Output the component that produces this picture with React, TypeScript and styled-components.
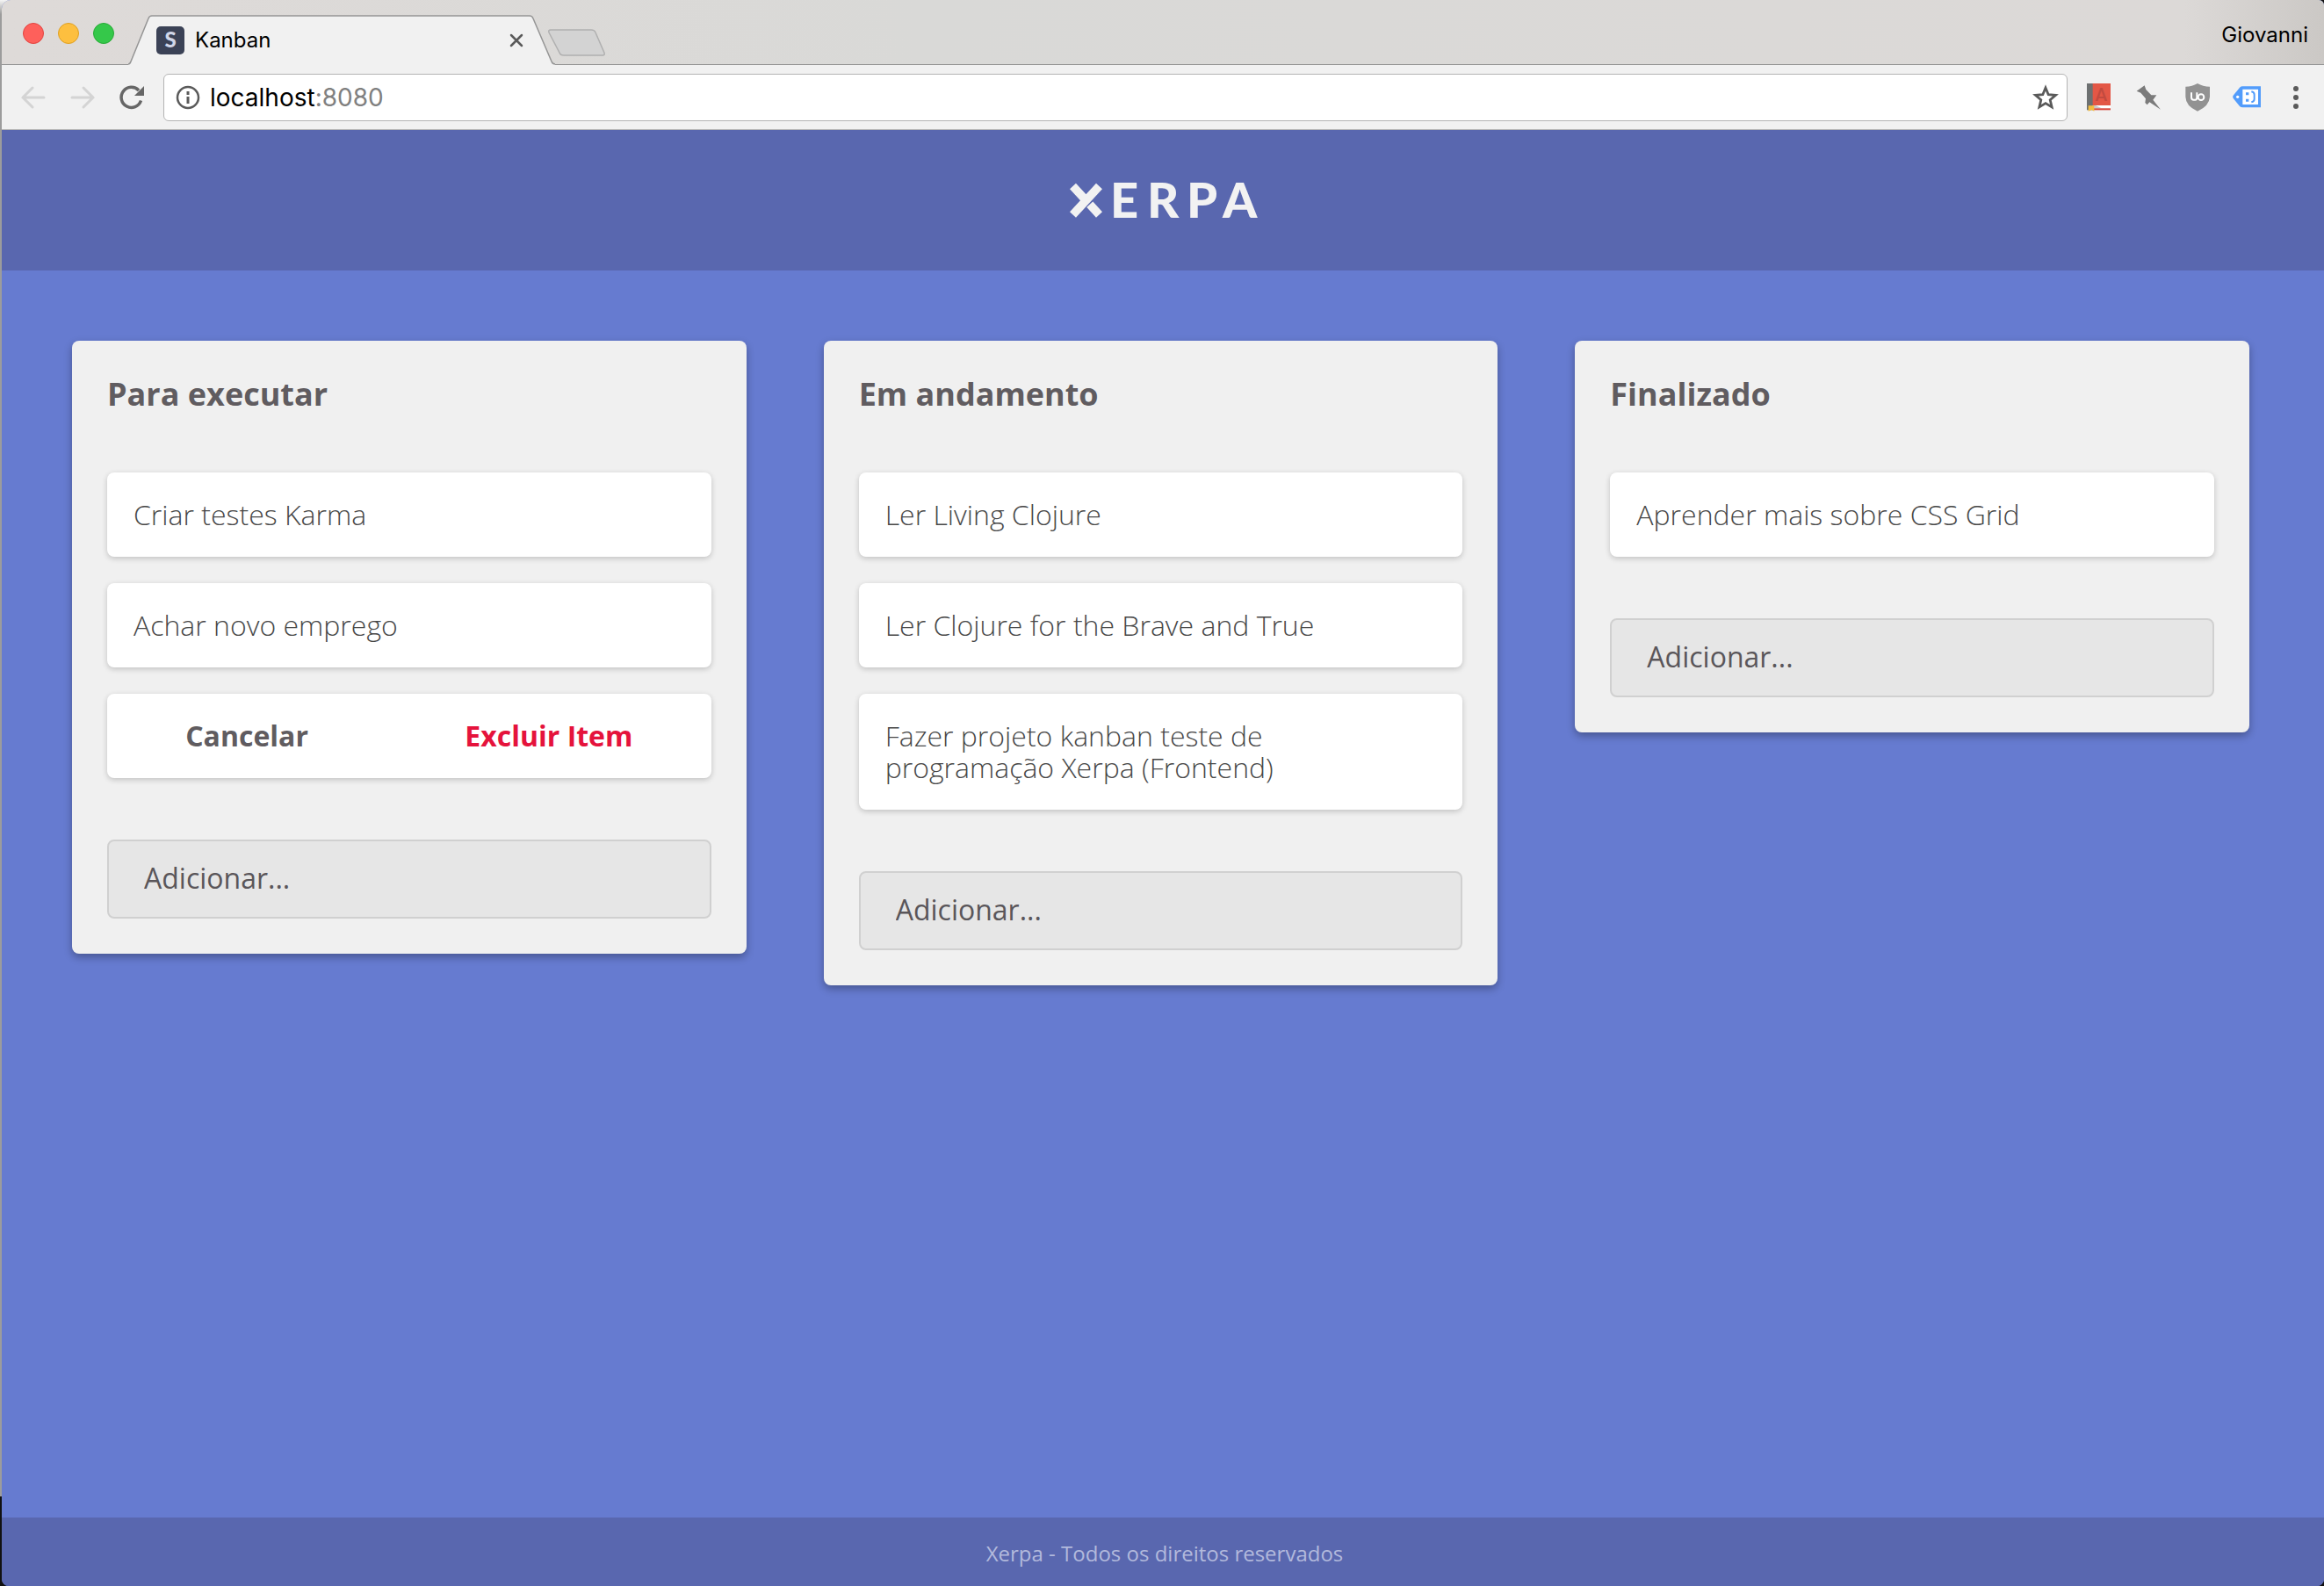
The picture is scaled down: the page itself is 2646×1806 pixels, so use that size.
import React from "react";
import styled, { createGlobalStyle } from "styled-components";

const sans = '"Open Sans", "Noto Sans", sans-serif';
const ui = 'Inter, Roboto, "Liberation Sans", sans-serif';

const GlobalStyle = createGlobalStyle`
  *, *::before, *::after { box-sizing: border-box; }
  html {
    min-height: 100%;
    background:
      linear-gradient(90deg, transparent 50%, #111 50%),
      linear-gradient(0deg, #111 102px, #9c9c9c 102px, #9c9c9c calc(100% - 16px), #f4f4f4 100%);
  }
  body { margin: 0; font-family: ${sans}; }
  button, input { font: inherit; }
`;

const Window = styled.div`
  display: flex;
  flex-direction: column;
  min-height: 100vh;
  margin-left: 2px;
  border-radius: 10px 6px 8px 8px;
  overflow: hidden;
  background: #667bd0;
`;

const IconButton = styled.button`
  display: flex;
  flex: none;
  padding: 0;
  border: 0;
  background: none;
  color: ${(p) => p.color || "#5a5a5a"};
`;

const TabStrip = styled.div`
  display: flex;
  align-items: flex-end;
  height: 74px;
  padding-right: 18px;
  background: linear-gradient(90deg, #dedad8, #d9d9d7 40%, #dcd9d7 94%, #cbc8c5);
  box-shadow: inset 0 -1px #959595;
`;

const Lights = styled.div`
  display: flex;
  gap: 16px;
  padding: 0 16px 24px 24px;
`;

const Light = styled.button<{ $fill: string; $edge: string }>`
  width: 24px;
  height: 24px;
  padding: 0;
  border: 1px solid ${(p) => p.$edge};
  border-radius: 50%;
  background: ${(p) => p.$fill};
`;

const Tab = styled.div`
  display: grid;
  width: 486px;
  height: 57px;
  > * { grid-area: 1 / 1; }
`;

const TabContent = styled.div`
  display: flex;
  align-items: center;
  gap: 12px;
  padding: 0 36px 0 32px;
`;

const TabTitle = styled.span`
  flex: 1;
  font: 24px/32px ${ui};
  color: #000;
`;

const NewTab = styled(IconButton)`
  padding: 0 0 8px;
  margin-left: -10px;
`;

const UserName = styled.button`
  margin-left: auto;
  padding: 0 0 18px;
  border: 0;
  background: none;
  && { font: 24px/32px ${ui}; }
  color: #000;
`;

const Toolbar = styled.div`
  display: flex;
  align-items: center;
  height: 74px;
  padding: 0 16px 0 20px;
  border-bottom: 1px solid #b8b8b8;
  background: #f1f1f1;
`;

const NavButtons = styled.div`
  display: flex;
  gap: 24px;
  margin-right: 20px;
`;

const AddressBar = styled.div`
  display: flex;
  flex: 1;
  align-items: center;
  height: 54px;
  padding: 0 8px 0 12px;
  gap: 10px;
  border: 1px solid #b4b4b4;
  border-radius: 6px;
  background: #fff;
`;

const Address = styled.div`
  flex: 1;
  font: 28px/36px ${ui};
  color: #808080;
  b { font-weight: 400; color: #000; }
`;

const Extensions = styled.div`
  display: flex;
  align-items: center;
  gap: 24px;
  margin-left: 20px;
`;

const Header = styled.header`
  display: flex;
  align-items: center;
  justify-content: center;
  height: 160px;
  padding-left: 4px;
  background: #5967af;
`;

const Board = styled.main`
  display: grid;
  flex: 1;
  grid-template-columns: repeat(3, minmax(0, 1fr));
  align-items: start;
  gap: 88px;
  padding: 80px 85px 80px 80px;
`;

const Column = styled.section`
  padding: 40px;
  border-radius: 8px;
  background: #f0f0f0;
  box-shadow: 0 4px 10px rgba(0, 0, 0, 0.3);
`;

const ColumnTitle = styled.h2`
  margin: 0 0 68px;
  font-size: 36px;
  font-weight: 700;
  line-height: 42px;
  color: #605c60;
`;

const CardList = styled.ul`
  display: grid;
  gap: 30px;
  margin: 0 0 70px;
  padding: 0;
  list-style: none;
`;

const Card = styled.li`
  padding: 30px 60px 30px 30px;
  border-radius: 8px;
  background: #fff;
  box-shadow: 0 2px 6px rgba(0, 0, 0, 0.2);
  font-size: 32px;
  font-weight: 300;
  line-height: 36px;
  color: #484848;
`;

const ActionCard = styled(Card)`
  display: flex;
  justify-content: space-around;
  padding: 30px 0;
`;

const Action = styled.button<{ $danger?: boolean }>`
  padding: 0;
  border: 0;
  background: none;
  color: ${(p) => (p.$danger ? "#e5133c" : "#605c60")};
  && { font-weight: 700; }
`;

const AddInput = styled.input`
  display: block;
  width: 100%;
  height: 90px;
  padding: 0 40px 4px;
  border: 2px solid #d0d0d0;
  border-radius: 8px;
  background: #e6e6e6;
  && { font-size: 32px; }
  color: #5a565a;
  &::placeholder { color: #5a565a; opacity: 1; }
`;

const Footer = styled.footer`
  height: 78px;
  padding: 20px 20px 20px 24px;
  background: #5967af;
  font-size: 24px;
  line-height: 42px;
  text-align: center;
  color: #b2b9dc;
`;

const columns = [
  { title: "Para executar", cards: ["Criar testes Karma", "Achar novo emprego"], confirming: true },
  {
    title: "Em andamento",
    cards: [
      "Ler Living Clojure",
      "Ler Clojure for the Brave and True",
      "Fazer projeto kanban teste de programação Xerpa (Frontend)",
    ],
  },
  { title: "Finalizado", cards: ["Aprender mais sobre CSS Grid"] },
];

const Logo = () => (
  <svg width="216" height="80" viewBox="0 -20 216 80" overflow="visible" role="img" aria-label="Xerpa">
    <path
      d="M33.5 4 3.500 36.500M3.500 4l15 16.200M22.800 24.800 33.500 36.500"
      stroke="#f2f2f2"
      strokeWidth="9.500"
    />
    <text x="46 88 133 174" y="40" fill="#f2f2f2" fontFamily="Lato, sans-serif" fontSize="56" fontWeight="900">
      ERPA
    </text>
  </svg>
);

const Arrow = ({ forward }: { forward?: boolean }) => (
  <svg width="32" height="36" viewBox="0 0 32 36" fill="none" stroke="currentColor" strokeWidth="3">
    <path
      d={forward ? "M4 18h24M17 7l11 11-11 11" : "M28 18H4M15 7 4 18l11 11"}
      strokeLinecap="round"
    />
  </svg>
);

const Reload = () => (
  <svg width="32" height="36" viewBox="0 0 32 36">
    <path d="M24 10A11.500 11.500 0 1 0 26.500 21.500" fill="none" stroke="#666" strokeWidth="3.500" />
    <path d="M30 5v11H19z" fill="#666" />
  </svg>
);

const Book = () => (
  <svg width="32" height="32" viewBox="0 0 96 96">
    <path d="M6 0h21v91H6z" fill="#6d7071" />
    <path d="M26 0h61v75H26z" fill="#e35746" />
    <path d="M26 75h61v10H26z" fill="#fff" />
    <path d="M26 75h10l20 10H26z" fill="#c8cacb" />
    <path d="M26 85h61v6H26z" fill="#d9453a" />
    <text x="55" y="61" textAnchor="middle" fontFamily="Roboto, sans-serif" fontSize="62" fontWeight="500" fill="#c24a3f">
      A
    </text>
    <path d="M11 76h20v19l-8-5-12 5z" fill="#f5bd3c" />
  </svg>
);

const Pin = () => (
  <svg width="32" height="32" viewBox="0 0 96 96">
    <path d="M8 26 35 7l5 14 18 19 18 0-12 16 26 33-38-25-8 9-7-7 2-14-17-20z" fill="#7b7b7b" />
  </svg>
);

const Shield = () => (
  <svg width="32" height="32" viewBox="0 0 96 96">
    <path d="M48 0q18 11 42 11v35q-2 32-42 49Q8 78 7 46V11q23 0 41-11z" fill="#929292" />
    <path d="M27 31v16q0 9 8 9h5q6 0 6-9V31" fill="none" stroke="#fff" strokeWidth="6" />
    <circle cx="60" cy="47" r="10" fill="#929292" stroke="#fff" strokeWidth="6" />
  </svg>
);

const Tag = () => (
  <svg width="32" height="32" viewBox="0 0 96 96">
    <path d="M96 10H34q-6 0-10 4L2 41q-3 5 0 10l22 27q4 4 10 4h62z" fill="#529cfb" />
    <path d="M34 20h53v52H34z" fill="#fff" />
    <circle cx="17" cy="46" r="5" fill="#fff" />
    <path d="M45 31h10v9H45zM45 53h10v9H45z" fill="#529cfb" />
    <path d="M64 28q10 2 10 10v16q0 8-10 10" fill="none" stroke="#529cfb" strokeWidth="6" />
  </svg>
);

const Dots = () => (
  <svg width="32" height="32" viewBox="0 0 32 32" fill="#5a5a5a">
    <circle cx="16" cy="6" r="3" />
    <circle cx="16" cy="16" r="3" />
    <circle cx="16" cy="26" r="3" />
  </svg>
);

const extensions = [
  { label: "Dicionário", Icon: Book },
  { label: "Fixar", Icon: Pin },
  { label: "Bloqueador", Icon: Shield },
  { label: "Etiqueta", Icon: Tag },
  { label: "Menu", Icon: Dots },
];

export default function App() {
  return (
    <>
      <GlobalStyle />
      <Window>
        <TabStrip>
          <Lights>
            <Light $fill="#fe605b" $edge="#e2433f" aria-label="Fechar janela" />
            <Light $fill="#fdbf3f" $edge="#dfa023" aria-label="Minimizar" />
            <Light $fill="#35c84a" $edge="#27aa35" aria-label="Maximizar" />
          </Lights>
          <Tab>
            <svg width="486" height="57" viewBox="0 0 486 57">
              <path d="M0 57V56Q2 56 3 53L23 4Q24 1 27 1H457Q460 1 461 4L482 53Q483 56 486 56V57Z" fill="#f1f1f1" />
              <path
                d="M0 56Q2 56 3 53L23 4Q24 1 27 1H457Q460 1 461 4L482 53Q483 56 486 56"
                fill="none"
                stroke="#959595"
                strokeWidth="1.500"
              />
            </svg>
            <TabContent>
              <svg width="32" height="32" viewBox="0 0 32 32">
                <rect width="32" height="32" rx="5" fill="#3b4256" />
                <text x="16" y="24" textAnchor="middle" fill="#d0d6e8" fontFamily="Lato, sans-serif" fontSize="24" fontWeight="900">
                  S
                </text>
              </svg>
              <TabTitle>Kanban</TabTitle>
              <IconButton aria-label="Fechar aba">
                <svg width="16" height="16" viewBox="0 0 16 16" stroke="currentColor" strokeWidth="2.500">
                  <path d="m2 2 12 12M14 2 2 14" strokeLinecap="round" />
                </svg>
              </IconButton>
            </TabContent>
          </Tab>
          <NewTab aria-label="Nova aba">
            <svg width="68" height="34" viewBox="0 0 68 34">
              <path
                d="M5 2h46q4 0 5 3l10 23q1 3-2 3H20q-4 0-5-3L3 5q-1-3 2-3Z"
                fill="#d3d3d3"
                stroke="#b0b0b0"
                strokeWidth="1.500"
              />
            </svg>
          </NewTab>
          <UserName>Giovanni</UserName>
        </TabStrip>
        <Toolbar>
          <NavButtons>
            <IconButton color="#d4d4d4" aria-label="Voltar"><Arrow /></IconButton>
            <IconButton color="#d4d4d4" aria-label="Avançar"><Arrow forward /></IconButton>
            <IconButton aria-label="Recarregar"><Reload /></IconButton>
          </NavButtons>
          <AddressBar>
            <svg width="30" height="30" viewBox="0 0 30 30">
              <circle cx="15" cy="15" r="12" fill="none" stroke="#5a5a5a" strokeWidth="2.500" />
              <path d="M15 8v4M15 14v8" stroke="#5a5a5a" strokeWidth="3" />
            </svg>
            <Address><b>localhost</b>:8080</Address>
            <IconButton aria-label="Favoritar">
              <svg width="32" height="32" viewBox="0 0 32 32" fill="none" stroke="currentColor" strokeWidth="2.800">
                <path d="m16 5 3.200 7.700 8.300.7-6.300 5.400 1.900 8.100L16 22.600 8.900 26.900l1.900-8.100-6.300-5.400 8.300-.7z" />
              </svg>
            </IconButton>
          </AddressBar>
          <Extensions>
            {extensions.map(({ label, Icon }) => (
              <IconButton key={label} aria-label={label}>
                <Icon />
              </IconButton>
            ))}
          </Extensions>
        </Toolbar>
        <Header><Logo /></Header>
        <Board>
          {columns.map((column) => (
            <Column key={column.title}>
              <ColumnTitle>{column.title}</ColumnTitle>
              <CardList>
                {column.cards.map((card) => (
                  <Card key={card}>{card}</Card>
                ))}
                {column.confirming && (
                  <ActionCard>
                    <Action>Cancelar</Action>
                    <Action $danger>Excluir Item</Action>
                  </ActionCard>
                )}
              </CardList>
              <AddInput placeholder="Adicionar..." aria-label={`Adicionar em ${column.title}`} />
            </Column>
          ))}
        </Board>
        <Footer>Xerpa - Todos os direitos reservados</Footer>
      </Window>
    </>
  );
}
